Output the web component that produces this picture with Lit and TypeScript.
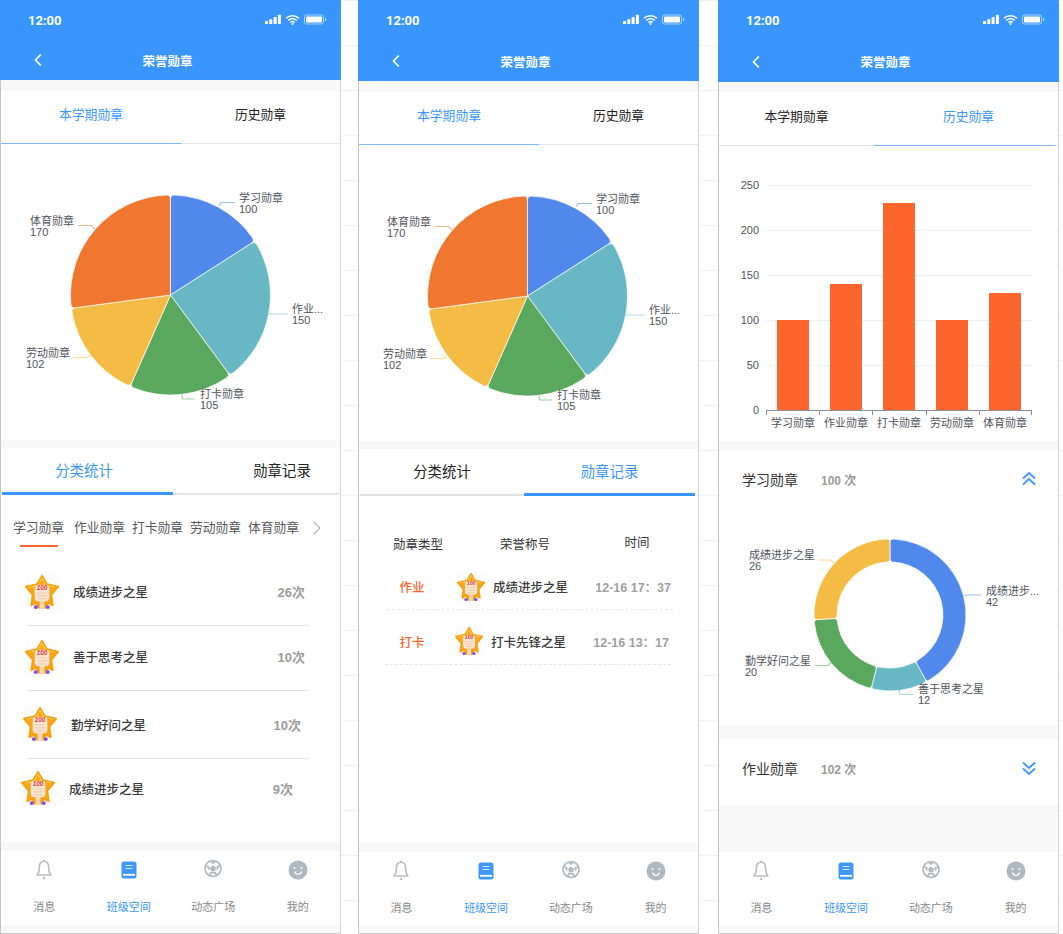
import { LitElement, css, html, svg } from 'lit';
import { customElement } from 'lit/decorators.js';

const BLUE = '#5088ec';
const TEAL = '#67b8c4';
const GREEN = '#59a85d';
const YELLOW = '#f4bc44';
const ORANGE = '#f0772f';

const polar = (cx: number, cy: number, r: number, deg: number) => {
  const a = (deg * Math.PI) / 180;
  return `${(cx + r * Math.sin(a)).toFixed(2)} ${(cy - r * Math.cos(a)).toFixed(2)}`;
};

// sector with rounded corners on the arcs, like echarts borderRadius
const sector = (cx: number, cy: number, r0: number, r1: number, a0: number, a1: number, cr: number) => {
  const d1 = ((cr / r1) * 180) / Math.PI;
  const large = a1 - a0 - 2 * d1 > 180 ? 1 : 0;
  let p = r0 === 0 ? `M${cx} ${cy}` : `M${polar(cx, cy, r0 + cr, a0)}`;
  p += ` L${polar(cx, cy, r1 - cr, a0)} Q${polar(cx, cy, r1, a0)} ${polar(cx, cy, r1, a0 + d1)}`;
  p += ` A${r1} ${r1} 0 ${large} 1 ${polar(cx, cy, r1, a1 - d1)}`;
  p += ` Q${polar(cx, cy, r1, a1)} ${polar(cx, cy, r1 - cr, a1)}`;
  if (r0 > 0) {
    const d0 = ((cr / r0) * 180) / Math.PI;
    p += ` L${polar(cx, cy, r0 + cr, a1)} Q${polar(cx, cy, r0, a1)} ${polar(cx, cy, r0, a1 - d0)}`;
    p += ` A${r0} ${r0} 0 ${large} 0 ${polar(cx, cy, r0, a0 + d0)}`;
    p += ` Q${polar(cx, cy, r0, a0)} ${polar(cx, cy, r0 + cr, a0)}`;
  }
  return p + ' Z';
};

type Slice = { value: number; color: string; line: string; name: string; x: number; y: number };

const ring = (cx: number, cy: number, r0: number, r1: number, cr: number, slices: Slice[]) => {
  const total = slices.reduce((s, i) => s + i.value, 0);
  let a = 0;
  return slices.map((s) => {
    const start = a;
    a += (s.value / total) * 360;
    return svg`
      <path d=${sector(cx, cy, r0, r1, start, a, cr)} fill=${s.color} stroke="#fff" stroke-width="0.7"></path>
      <path d=${s.line} fill="none" stroke=${s.color} stroke-opacity="0.55" stroke-width="1.2"></path>
      <text class="lbl" x=${s.x} y=${s.y}>${s.name}</text>
      <text class="lbl" x=${s.x} y=${s.y + 11}>${s.value}</text>
    `;
  });
};

const pieData: Slice[] = [
  { value: 100, color: BLUE, line: 'M219 206L221 202.5H235', name: '学习勋章', x: 239, y: 202 },
  { value: 150, color: TEAL, line: 'M269 313.5L272 314H287', name: '作业...', x: 292, y: 313 },
  { value: 105, color: GREEN, line: 'M182 395L182.5 399H195', name: '打卡勋章', x: 200, y: 398 },
  { value: 102, color: YELLOW, line: 'M90 355L87 357.5H73', name: '劳动勋章', x: 26, y: 357 },
  { value: 170, color: ORANGE, line: 'M95 229L91.5 225.5H78', name: '体育勋章', x: 30, y: 225 },
];

const donutData: Slice[] = [
  { value: 42, color: BLUE, line: 'M964 595.5L966 595H981', name: '成绩进步...', x: 986, y: 595 },
  { value: 12, color: TEAL, line: 'M899 690L900 694.5H913', name: '善于思考之星', x: 918, y: 693 },
  { value: 20, color: GREEN, line: 'M831 662.5L828 665.5H815', name: '勤学好问之星', x: 745, y: 665 },
  { value: 26, color: YELLOW, line: 'M834 563L830 560H818', name: '成绩进步之星', x: 749, y: 559 },
];

const bars = [
  { name: '学习勋章', value: 100, x: 777 },
  { name: '作业勋章', value: 140, x: 830 },
  { name: '打卡勋章', value: 230, x: 883 },
  { name: '劳动勋章', value: 100, x: 936 },
  { name: '体育勋章', value: 130, x: 989 },
];

const star = (cls = 'star') => html`
  <svg class=${cls} viewBox="0 0 36 36">
    <rect width="36" height="36" fill="#fdfcfb"></rect>
    <path d="M11 26h13l-1 9H12z" fill="#f59a12"></path>
    <path d="M17.500 1.500L22.500 10l11.500 2.500-7 8.500 1.500 10.500-11-5-11 5L8 21 1 12.500 12.500 10z"
      fill="#fba71b" stroke="#f7a010" stroke-width="2" stroke-linejoin="round"></path>
    <path d="M17.500 3.500l4 7.500 9.500 2" fill="none" stroke="#ffd44f" stroke-width="1"></path>
    <path d="M17.500 3.500l-4 7.500-9.500 2" fill="none" stroke="#ffd44f" stroke-width="1"></path>
    <rect x="10" y="10.500" width="15" height="17" rx="4" fill="#fbe6d4"></rect>
    <path d="M12 19h11M13 22h10M14 25h8" stroke="#f0c9aa" stroke-width="1.200"></path>
    <text x="17.500" y="16" text-anchor="middle" font-size="6.500" font-weight="700" font-style="italic"
      fill="#e2352b" font-family="Liberation Sans, sans-serif">100</text>
    <rect x="15" y="27" width="5" height="8" fill="#fbd9b4"></rect>
    <circle cx="11" cy="33.500" r="2" fill="#7d4df0"></circle>
    <circle cx="23.500" cy="33.500" r="2" fill="#7d4df0"></circle>
  </svg>
`;

const statusBar = () => html`
  <div class="status">
    <span class="clock">12:00</span>
    <svg class="sys" width="62" height="12" viewBox="0 0 62 12">
      <g fill="#fff">
        <rect x="0" y="7" width="3" height="3" rx=".5"></rect>
        <rect x="4.3" y="5.2" width="3" height="4.8" rx=".5"></rect>
        <rect x="8.6" y="3" width="3" height="7" rx=".5"></rect>
        <rect x="12.9" y="0.8" width="3" height="9.2" rx=".5"></rect>
      </g>
      <path d="M21 4.2a9.6 9.6 0 0 1 13 0M23.2 6.4a6.4 6.4 0 0 1 8.6 0M25.4 8.5a3.2 3.2 0 0 1 4.2 0"
        fill="none" stroke="#fff" stroke-width="1.5"></path>
      <circle cx="27.5" cy="10" r="1" fill="#fff"></circle>
      <rect x="39.5" y="1" width="19" height="9" rx="2" fill="none" stroke="#a9d0ff" stroke-width="1"></rect>
      <rect x="41" y="2.5" width="16" height="6" rx="1" fill="#fff"></rect>
      <rect x="60" y="4" width="1.2" height="3" fill="#a9d0ff"></rect>
    </svg>
  </div>
`;

const header = () => html`
  <header class="head">
    ${statusBar()}
    <div class="nav">
      <svg class="back" width="10" height="14" viewBox="0 0 10 14">
        <path d="M7.8 1.5L2.5 7l5.3 5.5" fill="none" stroke="#fff" stroke-width="1.7"></path>
      </svg>
      <span class="title">荣誉勋章</span>
    </div>
  </header>
`;

const footer = () => html`
  <nav class="tabbar">
    <div class="item">
      <svg width="24" height="24" viewBox="0 0 24 24">
        <path d="M12 3.200c-3.100 0-4.600 2.500-4.600 5.500 0 3.800-.6 6.300-2.400 8.300h14c-1.800-2-2.400-4.500-2.400-8.300 0-3-1.500-5.500-4.600-5.500z"
          fill="none" stroke="#bdbdbd" stroke-width="1.600" stroke-linejoin="round"></path>
        <circle cx="12" cy="2.600" r="1" fill="#bdbdbd"></circle>
        <circle cx="12" cy="20" r="1.300" fill="#bdbdbd"></circle>
      </svg>
      <span>消息</span>
    </div>
    <div class="item on">
      <svg width="24" height="24" viewBox="0 0 24 24">
        <rect x="4.500" y="3.500" width="15" height="17" rx="2.500" fill="#3e97ff"></rect>
        <path d="M8.500 7.500h7M8.500 10.500h7" stroke="#d9eaff" stroke-width="1.200"></path>
        <path d="M6 16.800h12" stroke="#fff" stroke-width="1.800"></path>
      </svg>
      <span>班级空间</span>
    </div>
    <div class="item">
      <svg width="24" height="24" viewBox="0 0 24 24">
        <circle cx="12" cy="10.500" r="8" fill="none" stroke="#aeb9c1" stroke-width="1.700"></circle>
        <path d="M12 7.500l3 2.200-1.100 3.500h-3.800L9 9.700z" fill="#aeb9c1"></path>
        <path d="M9.500 3.200L12 5l2.500-1.800M19 8l-2.500.8-.2 3M5 8l2.500.8.200 3M8.500 17l1.500-2.300h4l1.500 2.300"
          fill="none" stroke="#aeb9c1" stroke-width="1.800"></path>
      </svg>
      <span>动态广场</span>
    </div>
    <div class="item">
      <svg width="24" height="24" viewBox="0 0 24 24">
        <circle cx="12" cy="12" r="9.500" fill="#adb8c0"></circle>
        <circle cx="8.500" cy="10" r="1" fill="#fff"></circle>
        <circle cx="15.500" cy="10" r="1" fill="#fff"></circle>
        <path d="M8.500 13.500a3.600 3.600 0 0 0 7 0" fill="none" stroke="#fff" stroke-width="1.200"></path>
      </svg>
      <span>我的</span>
    </div>
  </nav>
`;

const pie = () => html`
  <svg class="chart" viewBox="1 144 339 296">${ring(170.5, 295, 0, 100, 4, pieData)}</svg>
`;

const barChart = () => html`
  <svg class="chart" viewBox="719 146 339 295">
    ${[0, 50, 100, 150, 200, 250].map((v) => {
      const y = 410 - v * 0.9;
      return svg`
        ${v > 0 ? svg`<path d="M766 ${y + 0.5}H1032" stroke="#eeeeee"></path>` : ''}
        <text class="lbl" x="759" y=${y + 4} text-anchor="end">${v}</text>
      `;
    })}
    ${bars.map(
      (b) => svg`
        <rect x=${b.x} y=${410 - b.value * 0.9} width="32" height=${b.value * 0.9} fill="#ff652c"></rect>
        <text class="lbl" x=${b.x + 16} y="427" text-anchor="middle">${b.name}</text>
      `,
    )}
    <path d="M766 410.500H1032M766.500 410v5M819.500 410v5M872.500 410v5M926.500 410v5M979.500 410v5M1031.500 410v5"
      stroke="#8b9097" fill="none"></path>
  </svg>
`;

const medalRows = [
  { name: '成绩进步之星', count: '26次', h: 65, pb: 3, left: -2, right: 5 },
  { name: '善于思考之星', count: '10次', h: 65, pb: 3, left: -2, right: 5 },
  { name: '勤学好问之星', count: '10次', h: 68, pb: 1, left: -4, right: 9 },
  { name: '成绩进步之星', count: '9次', h: 62, pb: 4, left: -6, right: 17 },
];

@customElement('app-root')
export class AppRoot extends LitElement {
  render() {
    return html`
      <div class="phone p1">
        ${header()}
        <div class="tabs">
          <div class="tab on">本学期勋章</div>
          <div class="tab">历史勋章</div>
        </div>
        <section class="plot">${pie()}</section>
        <div class="subtabs">
          <div class="sub on near">分类统计</div>
          <div class="sub far">勋章记录</div>
        </div>
        <main class="panel">
          <div class="cats">
            ${['学习勋章', '作业勋章', '打卡勋章', '劳动勋章', '体育勋章'].map(
              (c, i) => html`<div class="cat">${c}${i === 0 ? html`<i class="mark"></i>` : ''}</div>`,
            )}
            <svg class="more" width="10" height="14" viewBox="0 0 10 14">
              <path d="M2 1l6 6-6 6" fill="none" stroke="#b5b5b5" stroke-width="1.300"></path>
            </svg>
          </div>
          <div class="rows">
            ${medalRows.map(
              (r) => html`
                <div class="row" style="height:${r.h}px;padding-bottom:${r.pb}px">
                  <span class="offset" style="margin-left:${r.left}px">${star()}</span>
                  <span class="name">${r.name}</span>
                  <span class="count" style="padding-right:${r.right}px">${r.count}</span>
                </div>
              `,
            )}
          </div>
        </main>
        ${footer()}
      </div>

      <div class="phone p2">
        ${header()}
        <div class="tabs">
          <div class="tab on">本学期勋章</div>
          <div class="tab">历史勋章</div>
        </div>
        <section class="plot">${pie()}</section>
        <div class="subtabs">
          <div class="sub">分类统计</div>
          <div class="sub on">勋章记录</div>
        </div>
        <main class="panel">
          <div class="table">
            <div class="thead">
              <span>勋章类型</span>
              <span>荣誉称号</span>
              <span class="up">时间</span>
            </div>
            <div class="trow">
              <span class="kind">作业</span>
              ${star('star small')}
              <span class="name">成绩进步之星</span>
              <span class="when">12-16 17：37</span>
            </div>
            <div class="trow shift">
              <span class="kind">打卡</span>
              ${star('star small')}
              <span class="name">打卡先锋之星</span>
              <span class="when">12-16 13：17</span>
            </div>
          </div>
        </main>
        ${footer()}
      </div>

      <div class="phone p3">
        ${header()}
        <div class="tabs">
          <div class="tab">本学期勋章</div>
          <div class="tab on">历史勋章</div>
        </div>
        <section class="plot">${barChart()}</section>
        <section class="fold open">
          <div class="fold-head">
            <span class="fold-name">学习勋章</span>
            <span class="fold-num">100 次</span>
            <svg class="chev" width="16" height="16" viewBox="0 0 16 16">
              <path d="M2 7.500l6-5.500 6 5.500M2 13.500l6-5.500 6 5.500" fill="none" stroke="#3e97ff" stroke-width="1.800"></path>
            </svg>
          </div>
          <svg class="donut" viewBox="719 510 339 215">${ring(890, 615, 53, 76, 3, donutData)}</svg>
        </section>
        <section class="fold">
          <div class="fold-head">
            <span class="fold-name">作业勋章</span>
            <span class="fold-num">102 次</span>
            <svg class="chev" width="16" height="16" viewBox="0 0 16 16">
              <path d="M2 2.500l6 5.500 6-5.500M2 8.500l6 5.500 6-5.500" fill="none" stroke="#3e97ff" stroke-width="1.800"></path>
            </svg>
          </div>
        </section>
        <div class="grow"></div>
        ${footer()}
      </div>
    `;
  }

  static styles = css`
    :host {
      display: flex;
      width: 1063px;
      height: 934px;
      overflow: hidden;
      font-family: 'Liberation Sans', 'Noto Sans CJK SC', sans-serif;
      background-color: #fff;
      background-image:
        repeating-linear-gradient(to bottom, #f1f1f1 0 1px, transparent 1px 45px),
        repeating-linear-gradient(to right, #f4f4f4 0 1px, transparent 1px 45px);
      background-position: 0 0;
    }

    .phone {
      --head: 80px;
      --gap1: 11px;
      --tabs: 53px;
      --plot: 296px;
      --gap2: 8px;
      --foot-gap: 9px;
      display: flex;
      flex-direction: column;
      box-sizing: border-box;
      width: 341px;
      height: 934px;
      background: #f8f8f8;
      border-left: 1px solid #c6c6c6;
      border-right: 1px solid #d4d4d4;
      border-bottom: 1px solid #c9c9c9;
    }

    .p2 {
      --head: 81px;
      margin-left: 17px;
    }

    .p3 {
      --head: 82px;
      --gap1: 10px;
      --tabs: 54px;
      --plot: 295px;
      --gap2: 9px;
      margin-left: 19px;
    }

    .head {
      display: flex;
      flex-direction: column;
      flex: none;
      height: var(--head);
      background: #3996ff;
      color: #fff;
      margin: 0 -1px 0 -1px;
    }

    .status {
      display: flex;
      align-items: center;
      justify-content: space-between;
      height: 40px;
      padding: 0 14px 0 28px;
    }

    .clock {
      font-family: Roboto, sans-serif;
      font-size: 13px;
      font-weight: 700;
    }

    .nav {
      display: flex;
      flex: 1;
      align-items: center;
      padding: 0 0 0 33px;
    }

    .p2 .nav,
    .p3 .nav {
      padding-top: 1px;
    }

    .back {
      flex: none;
    }

    .title {
      flex: 1;
      padding-right: 49px;
      font-size: 12.5px;
      font-weight: 700;
      text-align: center;
    }

    .tabs {
      display: grid;
      grid-template-columns: 180px 1fr;
      flex: none;
      box-sizing: border-box;
      height: var(--tabs);
      margin-top: var(--gap1);
      background: #fff;
      border-bottom: 1px solid #e6e6e6;
    }

    .p3 .tabs {
      grid-template-columns: 155px 181px;
    }

    .p3 .tabs .tab.on {
      padding-left: 8px;
    }

    .tab {
      display: flex;
      align-items: center;
      justify-content: center;
      box-sizing: border-box;
      margin-bottom: -1px;
      padding-bottom: 7px;
      font-size: 12.8px;
      color: #222;
      border-bottom: 1px solid transparent;
    }

    .tab.on {
      color: #3996ff;
      border-bottom-color: #7fb8f8;
    }

    .plot {
      flex: none;
      height: var(--plot);
      background: #fff;
    }

    .chart,
    .donut {
      display: block;
      width: 339px;
      height: 100%;
    }

    .p2 .chart {
      margin-left: -1px;
    }

    .donut {
      height: 215px;
    }

    .lbl {
      font-size: 11px;
      fill: #50555c;
    }

    .subtabs {
      display: grid;
      grid-template-columns: 171px 1fr;
      flex: none;
      box-sizing: border-box;
      height: 47px;
      margin-top: var(--gap2);
      padding: 0 1px;
      background: #fff;
    }

    .p2 .subtabs {
      grid-template-columns: 164px 171px;
    }

    .sub {
      display: flex;
      align-items: center;
      justify-content: center;
      padding-bottom: 2px;
      font-size: 14.4px;
      color: #222;
      border-bottom: 2px solid #e3e3e3;
    }

    .sub.on {
      color: #3996ff;
      padding-bottom: 1px;
      border-bottom: 3px solid #3996ff;
    }

    .sub.near {
      padding-right: 7px;
    }

    .sub.far {
      padding-left: 52px;
    }

    .panel {
      flex: 1;
      min-height: 0;
      background: #fff;
    }

    .cats {
      display: flex;
      align-items: flex-start;
      gap: 7px;
      height: 51px;
      padding: 24px 0 0 12px;
      box-sizing: content-box;
    }

    .cat {
      display: flex;
      flex-direction: column;
      align-items: center;
      font-size: 12.75px;
      line-height: 18px;
      color: #55585c;
    }

    .cat:first-child {
      margin-right: 3px;
    }

    .mark {
      display: block;
      width: 38px;
      height: 2px;
      margin-top: 8px;
      background: #ff652c;
    }

    .more {
      margin: 2px 0 0 6px;
    }

    .rows {
      margin: -9px 30px 0 26px;
    }

    .row {
      display: flex;
      align-items: center;
      box-sizing: border-box;
      border-bottom: 1px solid #e2e2e2;
    }

    .row:last-child {
      border-bottom: 0;
    }

    .offset {
      display: flex;
    }

    .star {
      flex: none;
      display: block;
      width: 35px;
      height: 36px;
      margin-right: 13px;
    }

    .star.small {
      width: 29px;
      height: 30px;
      margin: 0 7px 0 20px;
    }

    .name {
      font-size: 12.5px;
      font-weight: 500;
      color: #3c3c3c;
      white-space: nowrap;
    }

    .count {
      margin-left: auto;
      font-size: 13px;
      font-weight: 700;
      color: #9b9b9b;
    }

    .table {
      padding: 36px 25px 0 28px;
    }

    .thead {
      display: grid;
      grid-template-columns: 62px 152px 72px;
      align-items: center;
      height: 23px;
      font-size: 12.5px;
      color: #333;
      text-align: center;
      white-space: nowrap;
    }

    .up {
      margin-top: -4px;
    }

    .trow {
      display: flex;
      align-items: center;
      box-sizing: border-box;
      height: 55px;
      padding-top: 9px;
      border-bottom: 1px dashed #e6e6e6;
    }

    .trow.shift {
      margin: 0 2px 0 -2px;
      padding-top: 8px;
    }

    .kind {
      width: 50px;
      font-size: 12.5px;
      font-weight: 500;
      text-align: center;
      color: #ff652c;
    }

    .trow.shift .kind {
      margin-left: 2px;
      margin-right: -2px;
    }

    .when {
      margin-left: auto;
      padding-right: 2px;
      font-size: 12.5px;
      font-weight: 700;
      color: #a0a0a0;
      white-space: nowrap;
    }

    .fold {
      flex: none;
      height: 66px;
      background: #fff;
    }

    .fold.open {
      height: 275px;
      margin-top: var(--gap2);
      margin-bottom: 14px;
    }

    .fold-head {
      display: flex;
      align-items: center;
      height: 60px;
      padding: 0 21px 2px 23px;
      box-sizing: border-box;
    }

    .fold-name {
      width: 79px;
      font-size: 14px;
      color: #333;
    }

    .fold-num {
      font-size: 12px;
      font-weight: 700;
      color: #9b9b9b;
    }

    .chev {
      margin-left: auto;
    }

    .grow {
      flex: 1;
    }

    .tabbar {
      display: grid;
      grid-template-columns: repeat(4, 1fr);
      flex: none;
      height: 74px;
      margin: var(--foot-gap) 0 8px;
      padding-left: 1px;
      background: #fff;
    }

    .p2 .tabbar,
    .p3 .tabbar {
      padding-left: 0;
      margin-bottom: 7px;
    }

    .item {
      display: flex;
      flex-direction: column;
      align-items: center;
      padding-top: 7px;
      font-size: 11px;
      color: #888;
    }

    .item svg {
      margin-bottom: 16px;
    }

    .item.on {
      color: #3996ff;
    }
  `;
}

declare global {
  interface HTMLElementTagNameMap {
    'app-root': AppRoot;
  }
}
